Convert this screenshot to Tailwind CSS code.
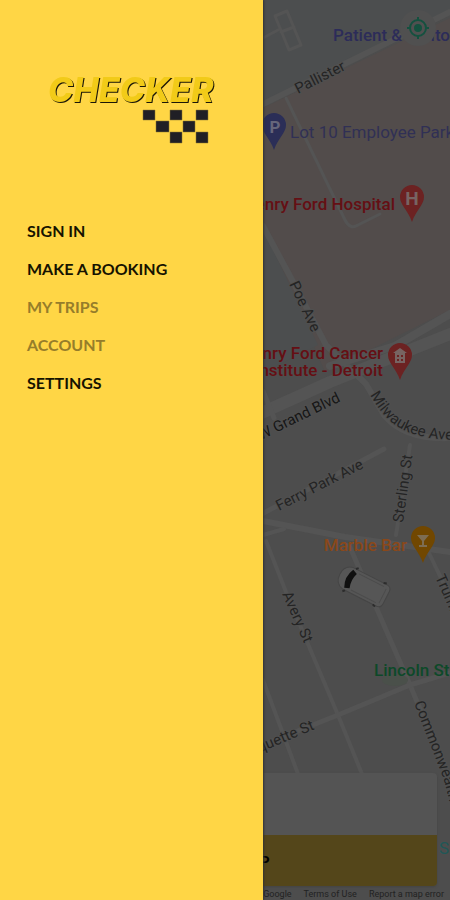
<!DOCTYPE html>
<html lang="en">
<head>
    <meta charset="UTF-8">
    <meta name="viewport" content="width=device-width, initial-scale=1.0">
    <title>Checker</title>
    <script src="https://cdn.jsdelivr.net/npm/@tailwindcss/browser@4"></script>
</head>
<body class="bg-[#4d4d4d]">
    <div class="relative flex min-h-screen flex-col justify-between overflow-hidden">
        <!-- Map -->
        <svg class="absolute inset-0 h-full w-full font-[Roboto,sans-serif]" viewBox="0 0 450 900" preserveAspectRatio="xMinYMin slice" role="img" aria-label="Map">
            <path d="M263 0H450V14L263 105Z" fill="#4c4e4f"/>
            <path d="M263 108L450 18V310L325 372L263 226Z" fill="#524c4b"/>
            <path d="M263 228L318 345L263 372Z" fill="#4c4e4f"/>
            <!-- Roads -->
            <g fill="none" stroke="#545454" stroke-linecap="round" stroke-linejoin="round">
                <path stroke-width="6" d="M255 108L450 12"/>
                <path stroke-width="3" d="M275 16L287 11L301 45L289 50ZM281 32L294 27M278 30L263 38"/>
                <path stroke-width="3" d="M286 98L345 220Q350 230 358 225L380 214"/>
                <path stroke-width="6" d="M263 226L291 278L326 345L366 384L384 415Q405 440 450 438"/>
                <path stroke-width="12" d="M255 416L330 382L450 334"/>
                <path stroke-width="8" d="M330 366L395 346L450 314"/>
                <path stroke-width="5" d="M384 449L258 516M263 391L274 418"/>
                <path stroke-width="6" d="M263 521L345 537L450 552"/>
                <path stroke-width="4" d="M410 445L396 535"/>
                <path stroke-width="4" d="M263 535L284 529M266 541L286 592L338 715L362 774"/>
                <path stroke-width="5" d="M349 545L410 685L450 780"/>
                <path stroke-width="5" d="M255 748L338 715L410 685L450 673"/>
                <path stroke-width="4" d="M429 553L450 597M263 680L298 774"/>
            </g>
            <ellipse cx="395" cy="680" rx="13" ry="6" fill="#4a504a"/>
            <!-- Street names -->
            <g font-size="15" fill="#242424" stroke="#505050" stroke-width="2" paint-order="stroke">
                <text transform="translate(298 94) rotate(-27)">Pallister</text>
                <text transform="translate(289 284) rotate(65)">Poe Ave</text>
                <text transform="translate(341 401) rotate(-26)" text-anchor="end" fill="#161616">W Grand Blvd</text>
                <path id="milwaukee" d="M370 395C386 422 402 440 460 440" fill="none" stroke="none"/>
                <text><textPath href="#milwaukee">Milwaukee Ave</textPath></text>
                <text transform="translate(279 511) rotate(-27)">Ferry Park Ave</text>
                <text transform="translate(403 523) rotate(-82)">Sterling St</text>
                <text transform="translate(282 594) rotate(66)">Avery St</text>
                <text transform="translate(435 577) rotate(66)">Trumbull</text>
                <text transform="translate(315 729) rotate(-23)" text-anchor="end">Marquette St</text>
                <path id="commonwealth" d="M414 703L438 765Q449 790 453 825" fill="none" stroke="none"/>
                <text><textPath href="#commonwealth">Commonwealth</textPath></text>
            </g>
            <!-- Places -->
            <g font-size="17" font-weight="500">
                <text x="333" y="41" fill="#2c2c59">Patient &amp; Visitor</text>
                <text x="290" y="138" fill="#303055" font-weight="400">Lot 10 Employee Parking</text>
                <text x="395" y="210" text-anchor="end" fill="#650f14">Henry Ford Hospital</text>
                <text x="383" y="359" text-anchor="end" fill="#650f14">Henry Ford Cancer</text>
                <text x="383" y="376" text-anchor="end" fill="#650f14">Institute - Detroit</text>
                <text x="407" y="551" text-anchor="end" fill="#8a481a">Marble Bar</text>
                <text x="374" y="676" fill="#0d4929">Lincoln Street</text>
                <text x="439" y="854" fill="#205857" font-weight="400">S</text>
            </g>
            <!-- Pins -->
            <g>
                <path d="M0 -12A12 12 0 0 1 12 0C12 8 4 13 0 25C-4 13 -12 8 -12 0A12 12 0 0 1 0 -12Z" transform="translate(274 125)" fill="#2b2e57"/>
                <text x="275" y="133" text-anchor="middle" font-size="17" font-weight="700" fill="#66667b">P</text>
                <path d="M0 -12A12 12 0 0 1 12 0C12 8 4 13 0 25C-4 13 -12 8 -12 0A12 12 0 0 1 0 -12Z" transform="translate(412 197)" fill="#6c2222"/>
                <text x="412" y="205" text-anchor="middle" font-size="19" font-weight="700" fill="#776463">H</text>
                <path d="M0 -12A12 12 0 0 1 12 0C12 8 4 13 0 25C-4 13 -12 8 -12 0A12 12 0 0 1 0 -12Z" transform="translate(400 355)" fill="#6c2222"/>
                <path d="M393 353L400 348L407 353H405V363H395V353Z" fill="#776463"/>
                <path d="M397 355h2v2h-2zM401 355h2v2h-2zM397 359h2v2h-2zM401 359h2v2h-2z" fill="#6c2222"/>
                <path d="M0 -12A12 12 0 0 1 12 0C12 8 4 13 0 25C-4 13 -12 8 -12 0A12 12 0 0 1 0 -12Z" transform="translate(423 538)" fill="#714700"/>
                <path d="M417 535H429L424 541V545H427V547H419V545H422V541Z" fill="#7d6d53"/>
            </g>
            <!-- Cab -->
            <g transform="translate(363 586) rotate(27)">
                <path d="M-17 -12H20Q26 -12 26 -7V7Q26 12 20 12H-17Q-26 10 -26 0Q-26 -10 -17 -12Z" fill="#565656" stroke="#454545"/>
                <path d="M-16 -10Q-21 0 -16 10L-11 8Q-14 0 -11 -8Z" fill="#101010"/>
                <path d="M-14 -12L-12 -14M-14 12L-16 14M17 -12L20 -13M17 12L20 13" stroke="#2c2c2c" stroke-width="2"/>
                <path d="M-9 -9H19M-9 9H19M22 -8V8" fill="none" stroke="#4b4b4b"/>
            </g>
        </svg>

        <header class="relative flex justify-end px-[14px] pt-[10px]">
            <button type="button" aria-label="My location" class="flex size-9 items-center justify-center rounded-full bg-[#505050]">
                <svg class="size-6" viewBox="0 0 24 24" fill="none" stroke="#14513f" stroke-width="2">
                    <circle cx="12" cy="12" r="8"/>
                    <circle cx="12" cy="12" r="4" fill="#14513f" stroke="none"/>
                    <path d="M12 1v4M12 19v4M1 12h4M19 12h4"/>
                </svg>
            </button>
        </header>

        <footer class="relative font-[Roboto,sans-serif]">
            <div class="mx-[13px] overflow-hidden rounded-sm bg-[#545454] shadow">
                <div class="h-[62px]"></div>
                <button type="button" class="h-[51px] w-full bg-[#54461a] text-center font-[Lato,sans-serif] text-base font-bold text-black">SET PICKUP</button>
            </div>
            <div class="flex h-[14px] items-end justify-end gap-3 px-[6px] text-[9px] leading-[12px] text-[#222]">
                <span>Map data ©2021 Google</span>
                <a href="#">Terms of Use</a>
                <a href="#">Report a map error</a>
            </div>
        </footer>

        <!-- Drawer -->
        <aside class="absolute inset-y-0 left-0 w-[263px] bg-[#ffd645] shadow-[1px_0_2px_#333]">
            <svg class="mt-[70px] ml-[44px] h-[76px] w-[180px]" viewBox="0 0 180 76" role="img" aria-label="Checker">
                <text x="4" y="32" font-family="Inter, sans-serif" font-weight="800" font-style="italic" font-size="34" fill="#f2cb18" class="drop-shadow-[1px_1px_0_#1b1708]">CHECKER</text>
                <path d="M99 40h12v10h-12zM126 40h12v10h-12zM152 40h12v10h-12zM112 51h13v11h-13zM139 51h12v11h-12zM126 62h12v11h-12zM152 62h12v11h-12z" fill="#201f25" stroke="#8a7430" stroke-width="0.5"/>
            </svg>
            <nav class="mt-[66px] px-[27px] font-[Lato,sans-serif] text-base font-bold text-[#161300]">
                <ul>
                    <li><a href="#" class="block py-[7px]">SIGN IN</a></li>
                    <li><a href="#" class="block py-[7px]">MAKE A BOOKING</a></li>
                    <li><a href="#" class="block py-[7px] text-[#967d2a]">MY TRIPS</a></li>
                    <li><a href="#" class="block py-[7px] text-[#967d2a]">ACCOUNT</a></li>
                    <li><a href="#" class="block py-[7px]">SETTINGS</a></li>
                </ul>
            </nav>
        </aside>
    </div>
</body>
</html>
